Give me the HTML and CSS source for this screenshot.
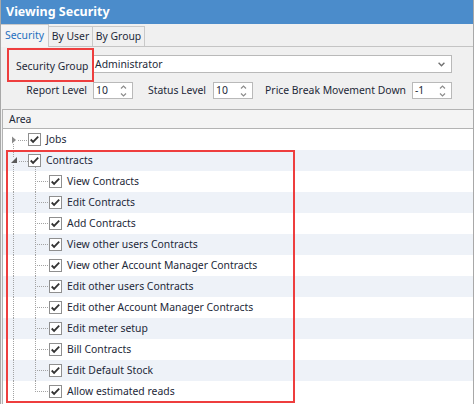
FILE: index.html
```html
<!DOCTYPE html>
<html>
<head>
<meta charset="utf-8">
<title>Viewing Security</title>
<link rel="stylesheet" href="styles.css">
</head>
<body>
<svg class="defs" width="0" height="0" aria-hidden="true">
  <symbol id="cb" viewBox="0 0 13 13">
    <rect x="0.5" y="0.5" width="12" height="12" fill="#fff" stroke="#8f8f8f"/>
    <path d="M2.7 6.5 5.1 8.9 10.2 3.7" fill="none" stroke="#333333" stroke-width="1.8"/>
  </symbol>
</svg>
<div class="window">
  <div class="titlebar">Viewing Security</div>
  <div class="tabs">
    <div class="tab active">Security</div>
    <div class="tab tab-user">By User</div>
    <div class="tab tab-group">By Group</div>
  </div>
  <div class="form">
    <div class="row1">
      <div class="lbl-group">Security Group</div>
      <div class="combo">
        <span>Administrator</span>
        <svg class="combo-arrow" width="7" height="5" viewBox="0 0 7 5"><path d="M0.6 0.8 3.5 3.7 6.4 0.8" fill="none" stroke="#707070" stroke-width="1.4"/></svg>
      </div>
    </div>
    <div class="row2">
      <div class="lbl lbl-report">Report Level</div>
      <div class="spin"><span>10</span><svg class="spin-arrows" width="7" height="14" viewBox="0 0 7 14"><path d="M1 4.5 3.5 2 6 4.5M1 9.5 3.5 12 6 9.5" fill="none" stroke="#8c8c8c" stroke-width="1.2"/></svg></div>
      <div class="lbl lbl-status">Status Level</div>
      <div class="spin"><span>10</span><svg class="spin-arrows" width="7" height="14" viewBox="0 0 7 14"><path d="M1 4.5 3.5 2 6 4.5M1 9.5 3.5 12 6 9.5" fill="none" stroke="#8c8c8c" stroke-width="1.2"/></svg></div>
      <div class="lbl lbl-price">Price Break Movement Down</div>
      <div class="spin"><span>-1</span><svg class="spin-arrows" width="7" height="14" viewBox="0 0 7 14"><path d="M1 4.5 3.5 2 6 4.5M1 9.5 3.5 12 6 9.5" fill="none" stroke="#8c8c8c" stroke-width="1.2"/></svg></div>
    </div>
    <div class="annot annot-group"></div>
  </div>
  <div class="tree">
    <div class="tree-head">Area</div>
    <div class="tree-body">
      <div class="row">
        <svg class="glyph-root" width="43" height="21" viewBox="0 0 43 21">
          <g stroke="#a3a3a3" stroke-dasharray="1 1" fill="none"><line x1="10.5" y1="15" x2="10.5" y2="21"/><line x1="15" y1="11.5" x2="25" y2="11.5"/></g>
          <polygon points="9,7.5 13,11 9,14.5" fill="#8a8a8a"/>
          <use href="#cb" x="25" y="4" width="13" height="13"/>
        </svg>
        <span>Jobs</span>
      </div>
      <div class="row">
        <svg class="glyph-root" width="43" height="21" viewBox="0 0 43 21">
          <g stroke="#a3a3a3" stroke-dasharray="1 1" fill="none"><line x1="10.5" y1="0" x2="10.5" y2="7"/><line x1="10.5" y1="15" x2="10.5" y2="21"/><line x1="16" y1="11.5" x2="25" y2="11.5"/><line x1="32.5" y1="17" x2="32.5" y2="21"/></g>
          <polygon points="14,7 14,13 8,13" fill="#5a5a5a"/>
          <use href="#cb" x="25" y="4" width="13" height="13"/>
        </svg>
        <span>Contracts</span>
      </div>
      <div class="row child"><svg width="64" height="21" viewBox="0 0 64 21"><g stroke="#a3a3a3" stroke-dasharray="1 1" fill="none"><line x1="10.5" y1="0" x2="10.5" y2="21"/><line x1="32.5" y1="0" x2="32.5" y2="21"/><line x1="34" y1="10.5" x2="46" y2="10.5"/></g><use href="#cb" x="46" y="4" width="13" height="13"/></svg><span>View Contracts</span></div>
      <div class="row child"><svg width="64" height="21" viewBox="0 0 64 21"><g stroke="#a3a3a3" stroke-dasharray="1 1" fill="none"><line x1="10.5" y1="0" x2="10.5" y2="21"/><line x1="32.5" y1="0" x2="32.5" y2="21"/><line x1="34" y1="10.5" x2="46" y2="10.5"/></g><use href="#cb" x="46" y="4" width="13" height="13"/></svg><span>Edit Contracts</span></div>
      <div class="row child"><svg width="64" height="21" viewBox="0 0 64 21"><g stroke="#a3a3a3" stroke-dasharray="1 1" fill="none"><line x1="10.5" y1="0" x2="10.5" y2="21"/><line x1="32.5" y1="0" x2="32.5" y2="21"/><line x1="34" y1="10.5" x2="46" y2="10.5"/></g><use href="#cb" x="46" y="4" width="13" height="13"/></svg><span>Add Contracts</span></div>
      <div class="row child"><svg width="64" height="21" viewBox="0 0 64 21"><g stroke="#a3a3a3" stroke-dasharray="1 1" fill="none"><line x1="10.5" y1="0" x2="10.5" y2="21"/><line x1="32.5" y1="0" x2="32.5" y2="21"/><line x1="34" y1="10.5" x2="46" y2="10.5"/></g><use href="#cb" x="46" y="4" width="13" height="13"/></svg><span>View other users Contracts</span></div>
      <div class="row child"><svg width="64" height="21" viewBox="0 0 64 21"><g stroke="#a3a3a3" stroke-dasharray="1 1" fill="none"><line x1="10.5" y1="0" x2="10.5" y2="21"/><line x1="32.5" y1="0" x2="32.5" y2="21"/><line x1="34" y1="10.5" x2="46" y2="10.5"/></g><use href="#cb" x="46" y="4" width="13" height="13"/></svg><span>View other Account Manager Contracts</span></div>
      <div class="row child"><svg width="64" height="21" viewBox="0 0 64 21"><g stroke="#a3a3a3" stroke-dasharray="1 1" fill="none"><line x1="10.5" y1="0" x2="10.5" y2="21"/><line x1="32.5" y1="0" x2="32.5" y2="21"/><line x1="34" y1="10.5" x2="46" y2="10.5"/></g><use href="#cb" x="46" y="4" width="13" height="13"/></svg><span>Edit other users Contracts</span></div>
      <div class="row child"><svg width="64" height="21" viewBox="0 0 64 21"><g stroke="#a3a3a3" stroke-dasharray="1 1" fill="none"><line x1="10.5" y1="0" x2="10.5" y2="21"/><line x1="32.5" y1="0" x2="32.5" y2="21"/><line x1="34" y1="10.5" x2="46" y2="10.5"/></g><use href="#cb" x="46" y="4" width="13" height="13"/></svg><span>Edit other Account Manager Contracts</span></div>
      <div class="row child"><svg width="64" height="21" viewBox="0 0 64 21"><g stroke="#a3a3a3" stroke-dasharray="1 1" fill="none"><line x1="10.5" y1="0" x2="10.5" y2="21"/><line x1="32.5" y1="0" x2="32.5" y2="21"/><line x1="34" y1="10.5" x2="46" y2="10.5"/></g><use href="#cb" x="46" y="4" width="13" height="13"/></svg><span>Edit meter setup</span></div>
      <div class="row child"><svg width="64" height="21" viewBox="0 0 64 21"><g stroke="#a3a3a3" stroke-dasharray="1 1" fill="none"><line x1="10.5" y1="0" x2="10.5" y2="21"/><line x1="32.5" y1="0" x2="32.5" y2="21"/><line x1="34" y1="10.5" x2="46" y2="10.5"/></g><use href="#cb" x="46" y="4" width="13" height="13"/></svg><span>Bill Contracts</span></div>
      <div class="row child"><svg width="64" height="21" viewBox="0 0 64 21"><g stroke="#a3a3a3" stroke-dasharray="1 1" fill="none"><line x1="10.5" y1="0" x2="10.5" y2="21"/><line x1="32.5" y1="0" x2="32.5" y2="21"/><line x1="34" y1="10.5" x2="46" y2="10.5"/></g><use href="#cb" x="46" y="4" width="13" height="13"/></svg><span>Edit Default Stock</span></div>
      <div class="row child"><svg width="64" height="21" viewBox="0 0 64 21"><g stroke="#a3a3a3" stroke-dasharray="1 1" fill="none"><line x1="10.5" y1="0" x2="10.5" y2="21"/><line x1="32.5" y1="0" x2="32.5" y2="11"/><line x1="34" y1="10.5" x2="46" y2="10.5"/></g><use href="#cb" x="46" y="4" width="13" height="13"/></svg><span>Allow estimated reads</span></div>
      <div class="annot annot-contracts"></div>
    </div>
  </div>
</div>
</body>
</html>
```

FILE: styles.css
```css
* { box-sizing: border-box; }
html, body { margin: 0; padding: 0; background: #ffffff; }
body {
  font-family: "Noto Sans", "Open Sans", sans-serif;
  font-size: 10.4px;
  color: #1d2838;
}
.defs { position: absolute; width: 0; height: 0; overflow: hidden; }

.window {
  width: 474px;
  height: 404px;
  border-left: 1px solid #a8a8a8;
  border-right: 1px solid #a8a8a8;
  background: #f0f0f0;
  overflow: hidden;
  display: flex;
  flex-direction: column;
}

.titlebar {
  height: 24px;
  flex: none;
  background: #4b8ccb;
  color: #ffffff;
  font-weight: bold;
  font-size: 12.5px;
  line-height: 24px;
  padding-left: 5px;
}

.tabs {
  height: 23px;
  flex: none;
  display: flex;
  align-items: flex-end;
  border-bottom: 1px solid #c4c4c4;
}
.tab {
  height: 20px;
  border-top: 1px solid #c9c9c9;
  border-right: 1px solid #c9c9c9;
  text-align: center;
  line-height: 19px;
  background: #f0f0f0;
}
.tab.active {
  width: 48px;
  height: 23px;
  margin-bottom: -1px;
  line-height: 21px;
  color: #1e6fbf;
  background: #f4f4f4;
}
.tab-user { width: 44px; }
.tab-group { width: 52px; }

.form {
  position: relative;
  height: 62px;
  flex: none;
  padding-top: 8px;
}
.row1 { display: flex; height: 18px; }
.lbl-group {
  width: 92px;
  padding-left: 15px;
  padding-top: 2px;
  line-height: 18px;
}
.combo {
  width: 359px;
  height: 18px;
  background: #ffffff;
  border: 1px solid #b9b9b9;
  display: flex;
  align-items: center;
  justify-content: space-between;
  padding: 0 6px 0 1px;
}
.row2 {
  display: flex;
  height: 17px;
  margin-top: 9px;
}
.lbl {
  text-align: right;
  line-height: 17px;
  margin-right: 6px;
  white-space: nowrap;
}
.lbl-report { width: 86px; }
.lbl-status { width: 73px; margin-right: 7px; }
.lbl-price { width: 153px; }
.spin {
  width: 40px;
  height: 17px;
  background: #ffffff;
  border: 1px solid #b9b9b9;
  display: flex;
  align-items: center;
  justify-content: space-between;
  padding: 0 5px 0 2px;
  line-height: 15px;
}
.spin-arrows { display: block; }
.combo-arrow { display: block; }

.tree {
  flex: 1;
  margin-left: 1px;
  background: #ffffff;
  border-left: 1px solid #b3b3b3;
  border-top: 1px solid #b3b3b3;
  overflow: hidden;
}
.tree-head {
  height: 19px;
  background: #f4f4f4;
  border-bottom: 1px solid #b3b3b3;
  padding-left: 6px;
  line-height: 18px;
}
.tree-body { position: relative; }
.row {
  height: 21px;
  display: flex;
  align-items: center;
  background: #ffffff;
  line-height: 21px;
  white-space: nowrap;
}
.row:nth-child(even) { background: #eef2f8; }
.row svg { display: block; flex: none; }

.annot {
  position: absolute;
  border: 2px solid #ee3e3e;
}
.annot-group { left: 6px; top: 1px; width: 87px; height: 34px; }
.annot-contracts { left: 3px; top: 21px; width: 289px; height: 253px; }
```
